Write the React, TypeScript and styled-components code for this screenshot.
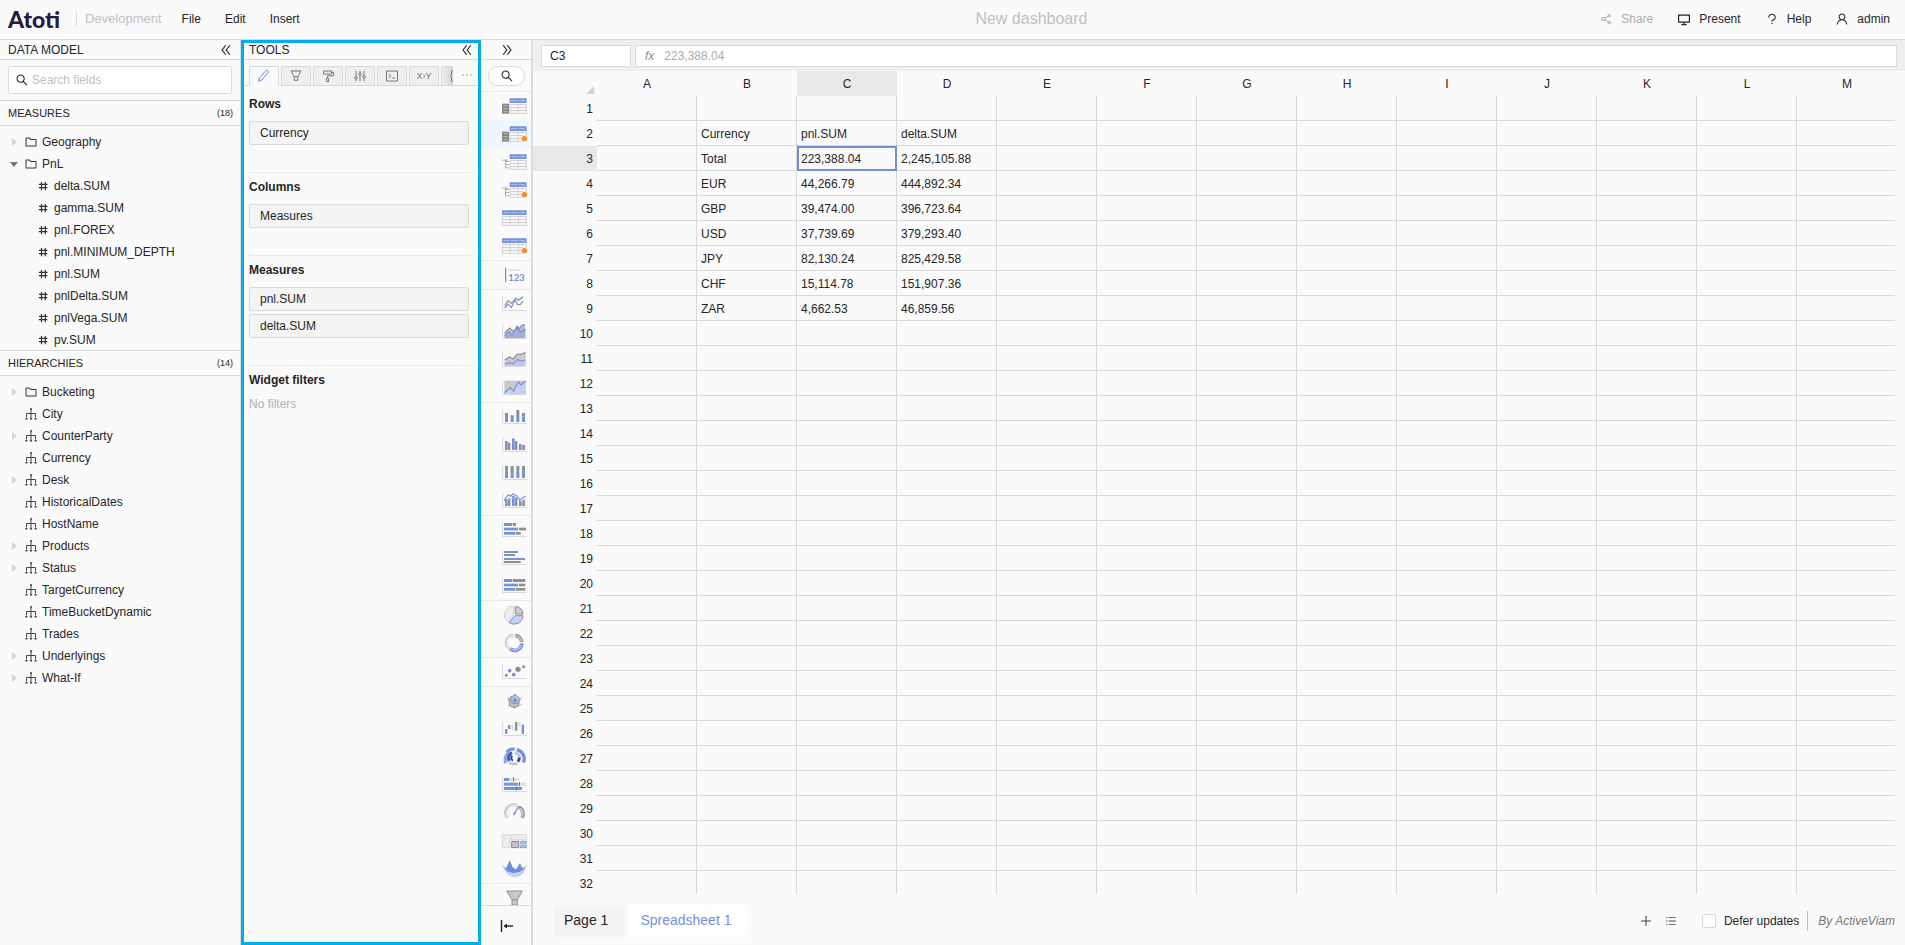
import React from "react";
import styled, { createGlobalStyle, css } from "styled-components";
import {
  AiOutlineDoubleLeft,
  AiOutlineDoubleRight,
  AiOutlineEllipsis,
  AiOutlineFolder,
  AiOutlinePlus,
  AiOutlineQuestion,
  AiOutlineSearch,
  AiOutlineShareAlt,
  AiOutlineUnorderedList,
  AiOutlineUser,
} from "react-icons/ai";

const c = {
  bg: "#fafafa",
  line: "#d9d9d9",
  soft: "#e8e8e8",
  text: "#262626",
  muted: "#bfbfbf",
  blue: "#7590dc",
  pale: "#b9c7ee",
  grey: "#8f8f8f",
  light: "#dedede",
  highlight: "#00aee9",
  orange: "#fa8c24",
};

const GlobalStyle = createGlobalStyle`
  *, *::before, *::after { box-sizing: border-box; }
  body {
    margin: 0;
    background: ${c.bg};
    color: ${c.text};
    font: 12px/16px "Liberation Sans", Arial, sans-serif;
  }
  button, input { font: inherit; color: inherit; }
  button { margin: 0; padding: 0; border: 0; background: none; cursor: pointer; }
  svg { display: block; flex: none; }
`;

/* ---------- Page frame ---------- */

const Page = styled.div`
  display: flex;
  flex-direction: column;
  height: 100vh;
  overflow: hidden;
`;

const Workspace = styled.div`
  display: flex;
  flex: 1;
  min-height: 0;
`;

const Header = styled.header`
  display: flex;
  align-items: center;
  flex: none;
  height: 40px;
  padding: 0 15px 2px 8px;
  border-bottom: 1px solid ${c.line};
`;

const Brand = styled.span`
  width: 68px;
  color: #2a1a40;
  font: 900 23px/24px Lato, sans-serif;
`;

const Environment = styled.span`
  padding-left: 8px;
  border-left: 1px solid ${c.line};
  color: ${c.muted};
  font-size: 13px;
  line-height: 14px;
`;

const Menu = styled.nav`
  display: flex;
  gap: 24px;
  margin-left: 20px;
`;

const Title = styled.h1`
  flex: 1;
  margin: 0;
  padding-left: 164px;
  text-align: center;
  color: ${c.muted};
  font-size: 16px;
  font-weight: 400;
  line-height: 20px;
`;

const Actions = styled.div`
  display: flex;
  gap: 24px;
`;

const Action = styled.button<{ $muted?: boolean }>`
  display: flex;
  align-items: center;
  gap: 8px;
  color: ${(p) => (p.$muted ? "#acacac" : c.text)};
`;

/* ---------- Side panels ---------- */

const PanelHead = styled.div`
  display: flex;
  align-items: center;
  justify-content: space-between;
  flex: none;
  height: 20px;
  padding: 0 7px 0 8px;
  border-bottom: 1px solid ${c.line};
`;

const PanelTitle = styled.h2`
  margin: 0;
  font-size: 12px;
  font-weight: 400;
  line-height: 16px;
`;

const DataModel = styled.aside`
  display: flex;
  flex-direction: column;
  flex: none;
  width: 241px;
  border-right: 1px solid ${c.line};
`;

const SearchRow = styled.div`
  flex: none;
  padding: 6px 8px;
  border-bottom: 1px solid ${c.line};
`;

const SearchBox = styled.label`
  display: flex;
  align-items: center;
  gap: 3px;
  height: 28px;
  padding: 0 6px;
  border: 1px solid ${c.line};
  border-radius: 2px;
  background: #fff;
`;

const SearchInput = styled.input`
  flex: 1;
  min-width: 0;
  padding: 0;
  border: 0;
  outline: 0;
  background: none;
  &::placeholder { color: ${c.muted}; opacity: 1; }
`;

const SectionHead = styled.div`
  display: flex;
  align-items: center;
  justify-content: space-between;
  flex: none;
  height: 25px;
  padding: 0 7px 0 8px;
  border-bottom: 1px solid ${c.line};
`;

const SectionTitle = styled.h3`
  margin: 0;
  font-size: 11px;
  font-weight: 400;
`;

const Count = styled.span`
  font-size: 9px;
`;

const Tree = styled.ul<{ $capped?: boolean }>`
  margin: 0;
  padding: 5px 8px;
  list-style: none;
  overflow: hidden;
  ${(p) =>
    p.$capped
      ? css`
          flex: 0 0 225px;
          border-bottom: 1px solid ${c.line};
        `
      : css`
          flex: 1;
        `}
`;

const TreeItem = styled.button<{ $level: number }>`
  display: flex;
  align-items: center;
  gap: 4px;
  width: 100%;
  height: 22px;
  padding-left: ${(p) => p.$level * 12}px;
`;

const CaretSlot = styled.span`
  display: grid;
  place-items: center;
  width: 12px;
  height: 12px;
`;

const Tools = styled.aside`
  display: flex;
  flex-direction: column;
  flex: none;
  width: 240px;
  outline: 3px solid ${c.highlight};
  outline-offset: -3px;
`;

const TabBar = styled.div`
  display: flex;
  flex: none;
  height: 26px;
  padding: 6px 0 0 8px;
  background: linear-gradient(${c.line}, ${c.line}) bottom / 100% 1px no-repeat;
`;

const TabStrip = styled.div`
  display: flex;
  gap: 2px;
  width: 204px;
  overflow: hidden;
`;

const ToolTab = styled.button<{ $active?: boolean; $faded?: boolean }>`
  display: grid;
  place-items: center;
  flex: 0 0 30px;
  height: 20px;
  border: 1px solid ${c.line};
  border-bottom-color: ${(p) => (p.$active ? c.bg : c.line)};
  border-radius: 2px 2px 0 0;
  background: ${(p) => (p.$active ? c.bg : p.$faded ? "linear-gradient(to right, #efefef, #d4d4d4 40%)" : "#efefef")};
  color: ${(p) => (p.$active ? c.blue : "#777")};
  font-size: 9px;
  line-height: 12px;
`;

const MoreTabs = styled.button`
  display: grid;
  place-items: center;
  width: 28px;
  height: 18px;
  color: ${c.grey};
`;

const Fields = styled.div`
  padding: 4px 8px 0;
`;

const FieldGroup = styled.section`
  padding: 6px 0 27px;
  & + & { border-top: 1px solid ${c.soft}; }
`;

const FieldTitle = styled.h3`
  margin: 0;
  font-size: 12px;
  line-height: 16px;
`;

const Chips = styled.div`
  display: flex;
  flex-direction: column;
  gap: 3px;
  padding: 9px 4px 0 0;
`;

const Chip = styled.button`
  height: 24px;
  padding: 0 10px;
  border: 1px solid ${c.line};
  border-radius: 2px;
  background: #f4f4f4;
  text-align: left;
`;

const EmptyNote = styled.p`
  margin: 8px 0 0;
  color: #b0b0b0;
`;

/* ---------- Widget gallery ---------- */

const Gallery = styled.aside`
  display: flex;
  flex-direction: column;
  flex: none;
  width: 52px;
  border-right: 2px solid #dcdcdc;
`;

const GalleryHead = styled.div`
  display: grid;
  justify-content: center;
  align-items: center;
  flex: none;
  height: 20px;
  padding-left: 2px;
  border-bottom: 1px solid ${c.line};
`;

const GallerySearch = styled.div`
  flex: none;
  height: 32px;
  padding: 6px 6px 5px 7px;
  border-bottom: 1px solid ${c.soft};
`;

const SearchPill = styled.button`
  display: grid;
  place-items: center;
  width: 37px;
  height: 20px;
  border: 1px solid ${c.line};
  border-radius: 10px;
  background: #fff;
`;

const WidgetScroll = styled.div`
  flex: 1;
  min-height: 0;
  overflow: hidden;
`;

const WidgetGroup = styled.div`
  & + & { border-top: 1px solid ${c.soft}; }
`;

const WidgetButton = styled.button<{ $active?: boolean }>`
  display: flex;
  justify-content: flex-end;
  width: 100%;
  height: 28px;
  padding-right: 4px;
  background: ${(p) => (p.$active ? "#eef6ff" : "transparent")};
`;

const GalleryFoot = styled.button`
  display: grid;
  justify-content: center;
  align-items: center;
  flex: none;
  height: 40px;
  padding-left: 2px;
  border-top: 1px solid ${c.line};
`;

/* ---------- Spreadsheet ---------- */

const Main = styled.main`
  display: flex;
  flex-direction: column;
  flex: 1;
  min-width: 0;
`;

const FormulaBar = styled.div`
  display: flex;
  gap: 4px;
  flex: none;
  height: 31px;
  padding: 5px 8px 4px;
  background: #efefef;
`;

const NameBox = styled.input`
  width: 90px;
  height: 22px;
  padding: 0 8px;
  border: 1px solid ${c.line};
  outline: 0;
  background: #fff;
`;

const FormulaBox = styled.label`
  display: flex;
  align-items: center;
  gap: 10px;
  flex: 1;
  height: 22px;
  padding: 0 9px;
  border: 1px solid ${c.line};
  background: #fff;
`;

const Fx = styled.span`
  color: ${c.grey};
  font-style: italic;
`;

const FormulaInput = styled(SearchInput)`
  color: #acacac;
`;

const SheetArea = styled.div`
  flex: 1;
  min-height: 0;
  margin-right: 10px;
  overflow: hidden;
`;

const Sheet = styled.table`
  width: 1364px;
  border-collapse: separate;
  border-spacing: 0;
  table-layout: fixed;
`;

const RowNumberCol = styled.col`
  width: 64px;
`;

const CornerCell = styled.th`
  padding: 0 3px 2px 0;
  vertical-align: bottom;
  svg { margin-left: auto; }
`;

const ColumnHead = styled.th<{ $active?: boolean }>`
  height: 25px;
  padding: 0;
  font-weight: 400;
  background: ${(p) => (p.$active ? "#e8e8e8" : "transparent")};
`;

const RowHead = styled.th<{ $active?: boolean }>`
  height: 25px;
  padding: 0 4px;
  font-weight: 400;
  text-align: right;
  background: ${(p) => (p.$active ? "#e8e8e8" : "transparent")};
`;

const Cell = styled.td<{ $active?: boolean }>`
  height: 25px;
  padding: 2px 4px 0;
  border-right: 1px solid ${c.line};
  border-bottom: 1px solid ${c.line};
  white-space: nowrap;
  ${(p) =>
    p.$active &&
    css`
      outline: 2px solid #7090d8;
      outline-offset: -2px;
    `}
`;

/* ---------- Footer ---------- */

const Footer = styled.footer`
  display: flex;
  align-items: center;
  flex: none;
  height: 51px;
  padding: 11px 10px 8px 20px;
`;

const PageTabs = styled.div`
  display: flex;
  gap: 4px;
  margin-right: auto;
`;

const PageTab = styled.button<{ $active?: boolean }>`
  height: 32px;
  padding: 0 17px 2px 11px;
  border-radius: 0 0 4px 4px;
  background: ${(p) => (p.$active ? "#fff" : "#f4f4f4")};
  color: ${(p) => (p.$active ? c.blue : c.text)};
  font-size: 14px;
`;

const IconButton = styled.button`
  display: grid;
  place-items: center;
  width: 25px;
  height: 24px;
  color: #444;
`;

const Defer = styled.label`
  display: flex;
  align-items: center;
  gap: 8px;
  margin-left: 18px;
`;

const CheckBox = styled.input`
  appearance: none;
  width: 14px;
  height: 14px;
  margin: 0;
  border: 1px solid ${c.line};
  border-radius: 2px;
  background: #fff;
`;

const Credit = styled.em`
  margin-left: 8px;
  padding-left: 10px;
  border-left: 1px solid ${c.muted};
  color: #777;
  line-height: 20px;
`;

/* ---------- Small icons ---------- */

const PresentIcon = () => (
  <svg width="14" height="14" viewBox="0 0 14 14" fill="none" stroke="currentColor" strokeWidth="1.2">
    <path d="M1.6 3.2h10.8v7H1.6z" />
    <path d="M7 10v2.4M4.4 12.6h5.2" />
  </svg>
);

const HashIcon = () => (
  <svg width="14" height="14" viewBox="0 0 14 14" fill="none" stroke="#333" strokeWidth="1.2">
    <path d="M5.5 3v8.200M9.300 3v8.200M3 5.400h8.500M2.800 8.600h8.500" />
  </svg>
);

const HierarchyIcon = () => (
  <svg width="14" height="14" viewBox="0 0 14 14" fill="none" stroke="#444">
    <path d="M7 2V12M2.500 10.500V6.500h9v4" />
    <path d="M6 2h2M1.300 11.800h2.200M5.900 11.800h2.200M10.500 11.800h2.200" strokeWidth="1.500" />
  </svg>
);

const Caret = ({ open }: { open?: boolean }) => (
  <svg width="10" height="10" viewBox="0 0 10 10">
    {open ? <path d="M1 3h8L5 8z" fill="#777" /> : <path d="M3 1v8l5-4z" fill="#d4d4d4" />}
  </svg>
);

const tabArt: Record<string, React.ReactNode> = {
  Edit: <path d="M1.5 12.5l1-3.5L9 1.4q.8-.7 1.7 0t.6 1.8L5 10.8z" />,
  Filters: <path d="M2 2h10L8.8 7.6H5.2zM5.2 7.600v3.700h3.600V7.600" />,
  Style: <path d="M2.5 2h8v3h-8zM10.5 3.4h2v3.4H6.6v2.4M5.6 9.2h2v3.4h-2z" />,
  Properties: (
    <path d="M3 1.5v6M3 10v2.5M7 1.5v2.5M7 6.5v6M11 1.5v5M11 9v3.5M1.6 8.8a1.4 1.2 0 1 0 2.8 0a1.4 1.2 0 1 0-2.8 0M5.6 5.2a1.4 1.2 0 1 0 2.8 0a1.4 1.2 0 1 0-2.8 0M9.6 7.8a1.4 1.2 0 1 0 2.8 0a1.4 1.2 0 1 0-2.8 0" />
  ),
  Query: <path d="M1.5 2h11v10h-11zM3.8 4.8l2 2-2 2M7.2 9h3" />,
  Code: <path d="M4.500 1.500H3.500Q2.500 1.500 2.500 3V5.500L1.500 7L2.500 8.500V11Q2.500 12.500 3.500 12.500H4.500M9.500 1.500h1q1 0 1 1.500v2.500l1 1.500l-1 1.500V11q0 1.500-1 1.500h-1" />,
};

const TabIcon = ({ name }: { name: string }) => (
  <svg width="14" height="14" viewBox="0 0 14 14" fill="none" stroke="currentColor">
    {tabArt[name]}
  </svg>
);

const CollapseIcon = () => (
  <svg width="14" height="14" viewBox="0 0 14 14" stroke="#222" fill="none">
    <path d="M1.5 1v12" strokeWidth="1.4" />
    <path d="M4.5 7H13" strokeWidth="1.4" />
    <path d="M3.500 7l3.500-2.500v5z" fill="#222" stroke="none" />
  </svg>
);

/* ---------- Widget icons, each on a 78 x 84 board ---------- */

type Box = [x: number, y: number, w: number, h: number, fill: string];

const Boxes = ({ items }: { items: Box[] }) => (
  <>
    {items.map(([x, y, width, height, fill], i) => (
      <rect key={i} x={x} y={y} width={width} height={height} fill={fill} />
    ))}
  </>
);

const Axis = () => <path d="M5 19V61.500H77" fill="none" stroke="#d8d8d8" strokeWidth="3" />;

const TableArt = ({ left, dot }: { left?: "rows" | "tree"; dot?: boolean }) => {
  const x = left ? 26 : 3;
  const w = 77 - x;
  const cols = left ? 2 : 3;
  const inner = Array.from({ length: cols - 1 }, (_, i) => x + (w * (i + 1)) / cols);
  return (
    <>
      <rect x={x} y="19" width={w} height="14" rx="2" fill={c.blue} />
      <path d={`M${x + 4} 26H${x + w - 4}`} stroke="#a9baec" strokeWidth="4" />
      {inner.map((v) => (
        <path key={v} d={`M${v} 20V32`} stroke={c.blue} strokeWidth="3" />
      ))}
      <path
        d={`M${x + 1} 37.500H${x + w - 1}V64H${x + 1}zM${x} 46.500H${x + w}M${x} 55.500H${x + w}${inner.map((v) => `M${v} 36V65`).join("")}`}
        fill="#f7f7f7"
        stroke="#d2d2d2"
        strokeWidth="3"
      />
      {left === "rows" && (
        <>
          <rect x="3" y="35" width="21" height="30" fill="#868686" />
          <path d="M7 41H20M7 50H20M7 59H20" stroke="#bdbdbd" strokeWidth="3" />
        </>
      )}
      {left === "tree" && (
        <>
          <path d="M3 36.500H7M10 36.500H20" stroke="#8d8d8d" strokeWidth="3" />
          <path d="M13.500 37V60M13 40.500H24M13 49.500H24M13 59.500H24" fill="none" stroke="#b0b0b0" strokeWidth="3" />
        </>
      )}
      {dot && <circle cx="70" cy="56" r="10" fill={c.bg} />}
      {dot && <circle cx="70" cy="56" r="8" fill={c.orange} />}
    </>
  );
};

const Stroke = ({ d, color, width = 3.5 }: { d: string; color: string; width?: number }) => (
  <path d={d} fill="none" stroke={color} strokeWidth={width} strokeLinejoin="round" />
);

const blueRun = "M11 54L24 41L33 52L48 24L55 32L62 22L72 20";
const barX = [12, 29, 46, 63];

const widgetArt: Record<string, React.ReactNode> = {
  "Pivot table": <TableArt left="rows" />,
  "Pivot table with filters": <TableArt left="rows" dot />,
  "Tree table": <TableArt left="tree" />,
  "Tree table with filters": <TableArt left="tree" dot />,
  Table: <TableArt />,
  "Table with filters": <TableArt dot />,
  KPI: (
    <>
      <path d="M14 20V63" stroke="#777" strokeWidth="3" />
      <path d="M23 27H59" stroke={c.light} strokeWidth="5" />
      <text x="22" y="61" fontSize="28" fontWeight="700" fontFamily="Lato, sans-serif" fill={c.blue}>
        123
      </text>
    </>
  ),
  "Line chart": (
    <>
      <Axis />
      <Stroke d="M11 47L22 32L31 40L41 29L49 43L57 44L66 34" color={c.grey} />
      <Stroke d="M11 54L22 42L31 53L44 24L52 31L66 20" color={c.blue} />
    </>
  ),
  "Area chart": (
    <>
      <Axis />
      <path d="M11 45L26 30L38 40L48 30L60 42L74 34V60H11z" fill="#c9c9c9" />
      <path d={`${blueRun}V60H11z`} fill="#8fa4e0" opacity="0.7" />
      <Stroke d="M11 45L26 30L38 40L48 30L60 42L74 34" color={c.grey} />
      <Stroke d={blueRun} color={c.blue} />
    </>
  ),
  "Stacked area chart": (
    <>
      <Axis />
      <path d="M11 42L26 32L36 39L50 24L58 26L74 20V42L11 56z" fill="#cccccc" />
      <path d="M11 54L26 50L36 53L50 40L58 45L74 42V60H11z" fill={c.pale} />
      <Stroke d="M11 42L26 32L36 39L50 24L58 26L74 20" color={c.grey} />
      <Stroke d="M11 54L26 50L36 53L50 40L58 45L74 42" color={c.blue} />
    </>
  ),
  "Full area chart": (
    <>
      <Axis />
      <rect x="10" y="20" width="64" height="40" fill="#c8c8c8" />
      <path d="M10 56L28 41L38 51L52 23L59 33L74 22V60H10z" fill="#c3cff1" />
      <Stroke d="M10 56L28 41L38 51L52 23L59 33L74 22" color={c.blue} />
    </>
  ),
  "Stacked columns": (
    <>
      <Axis />
      <Boxes
        items={[[30, 42], [37, 45], [21, 33], [30, 40]].flatMap(([top, split], i): Box[] => [
          [barX[i], top, 9, split - top, c.grey],
          [barX[i], split, 9, 57 - split, c.blue],
        ])}
      />
    </>
  ),
  "Clustered columns": (
    <>
      <Axis />
      <Boxes
        items={[
          [12, 30, 8, 27, c.blue], [21, 35, 7, 22, c.grey],
          [33, 22, 8, 35, c.blue], [42, 30, 7, 27, c.grey],
          [54, 39, 8, 18, c.blue], [64, 42, 8, 15, c.grey],
        ]}
      />
    </>
  ),
  "Full columns": (
    <>
      <Axis />
      <Boxes
        items={[34, 44, 35, 34].flatMap((split, i): Box[] => [
          [barX[i], 21, 9, split - 21, c.grey],
          [barX[i], split, 9, 57 - split, c.blue],
        ])}
      />
    </>
  ),
  "Combo chart": (
    <>
      <Axis />
      <Boxes
        items={[
          [12, 37, 8, 20, c.blue], [21, 34, 7, 23, c.grey],
          [33, 27, 8, 30, c.blue], [42, 31, 7, 26, c.grey],
          [54, 42, 8, 15, c.blue], [64, 38, 8, 19, c.grey],
        ]}
      />
      <Stroke d="M9 41L22 23L29 28L35 21L48 27L56 40L74 27" color={c.blue} />
      <Stroke d="M12 50L28 36L48 29L74 46" color={c.pale} width={2} />
    </>
  ),
  "Stacked bars": (
    <>
      <Axis />
      <Boxes
        items={[
          [9, 21, 24, 9, c.blue], [35, 21, 10, 9, c.grey],
          [9, 35, 42, 8, c.blue], [54, 35, 21, 8, c.grey],
          [9, 48, 34, 8, c.blue], [45, 48, 14, 8, c.grey],
        ]}
      />
    </>
  ),
  "Clustered bars": (
    <>
      <Axis />
      <Boxes
        items={[
          [9, 21, 42, 6, c.blue], [9, 30, 33, 6, c.grey],
          [9, 42, 63, 6, c.blue], [9, 51, 50, 6, c.grey],
        ]}
      />
    </>
  ),
  "Full bars": (
    <>
      <Axis />
      <Boxes
        items={[
          [9, 21, 24, 9, c.blue], [35, 21, 38, 9, c.grey],
          [9, 35, 42, 8, c.blue], [54, 35, 19, 8, c.grey],
          [9, 48, 33, 8, c.blue], [44, 48, 29, 8, c.grey],
        ]}
      />
    </>
  ),
  "Pie chart": (
    <g strokeWidth="3">
      <path d="M38 42V16A26 26 0 0 0 20 62z" fill="#ececec" stroke="#cfcfcf" />
      <path d="M43 39V16A24 24 0 0 1 66 39z" fill="#cdcdcd" stroke={c.grey} />
      <path d="M42 44H66A26 26 0 0 1 24 64z" fill="#c6d2f3" stroke={c.blue} />
    </g>
  ),
  "Donut chart": (
    <g fill="none" strokeWidth="11">
      <path d="M38 20A21 21 0 0 0 24 57" stroke="#cfcfcf" />
      <path d="M37 21A21 21 0 0 0 25 56" stroke="#f0f0f0" strokeWidth="5" />
      <path d="M43 20A21 21 0 0 1 62 39" stroke={c.grey} />
      <path d="M44 21A21 21 0 0 1 61 37" stroke="#c4c4c4" strokeWidth="5" />
      <path d="M62 43A21 21 0 0 1 27 59" stroke={c.blue} />
      <path d="M61 46A21 21 0 0 1 29 60" stroke="#b9c7ee" strokeWidth="4" />
    </g>
  ),
  "Scatter chart": (
    <>
      <Axis />
      <circle cx="26" cy="38" r="5.500" fill={c.blue} />
      <circle cx="51" cy="34" r="8" fill={c.grey} />
      <circle cx="68" cy="26" r="4.500" fill={c.blue} />
      <circle cx="38" cy="50" r="5.500" fill={c.blue} />
      <circle cx="16" cy="52" r="4.500" fill={c.grey} />
    </>
  ),
  "Radar chart": (
    <>
      <path d="M41 19V65M18 33L62 54M63 31L20 58" stroke="#b0b0b0" strokeWidth="2.500" />
      <path d="M23 37L35 31L54 40L53 57L38 62L26 56z" fill="#bcbcbc" stroke={c.grey} strokeWidth="3" />
      <path d="M27 31L44 23L58 37L48 50L34 48z" fill="#a9baec" fillOpacity="0.800" stroke={c.blue} strokeWidth="3" />
      <path d="M35 40L44 34L48 42L40 47z" fill={c.grey} />
    </>
  ),
  "Waterfall chart": (
    <>
      <Axis />
      <Boxes
        items={[
          [12, 42, 7, 15, c.blue], [21, 30, 7, 12, c.grey], [31, 30, 7, 17, c.light],
          [42, 21, 7, 26, c.grey], [52, 21, 7, 13, c.light], [62, 29, 7, 28, c.blue],
        ]}
      />
    </>
  ),
  Sunburst: (
    <g fill="none">
      <path d="M15 60A28 28 0 0 1 24 28" stroke="#8fa6e6" strokeWidth="11" />
      <path d="M17 27Q26 17 41 18" stroke={c.blue} strokeWidth="9" />
      <path d="M47 20A27 27 0 0 1 67 58" stroke={c.blue} strokeWidth="10" />
      <path d="M25 54A18 18 0 0 1 33 29" stroke="#3f5fb8" strokeWidth="9" />
      <path d="M41 30A16 16 0 0 1 56 42" stroke={c.pale} strokeWidth="9" />
      <path d="M55 43A16 16 0 0 1 50 56" stroke="#34497f" strokeWidth="9" />
      <path d="M34 38A9 9 0 0 0 36 53" stroke="#34497f" strokeWidth="6" />
      <path d="M25 59Q36 67 49 60" stroke={c.pale} strokeWidth="8" />
    </g>
  ),
  "Bullet chart": (
    <>
      <Axis />
      <Boxes
        items={[
          [9, 21, 16, 9, c.blue], [27, 21, 28, 9, c.light], [36, 19, 3, 13, "#777"],
          [9, 35, 43, 9, c.blue], [52, 35, 24, 9, c.light], [54, 33, 3, 13, "#777"],
          [9, 48, 54, 9, c.blue], [45, 46, 3, 13, "#777"],
        ]}
      />
    </>
  ),
  Gauge: (
    <g fill="none">
      <path d="M20 56A23 23 0 0 1 47 20" stroke="#cfcfcf" strokeWidth="11" />
      <path d="M21 53A23 23 0 0 1 45 20" stroke="#ececec" strokeWidth="5" />
      <path d="M54 24A23 23 0 0 1 63 56" stroke={c.grey} strokeWidth="11" />
      <path d="M56 27A23 23 0 0 1 63 53" stroke="#cdcdcd" strokeWidth="5" />
      <path d="M40 45L53 21" stroke={c.blue} strokeWidth="4" />
      <circle cx="40" cy="44" r="3.500" fill={c.blue} />
    </g>
  ),
  Treemap: (
    <g strokeWidth="2.500">
      <path d="M4 23H27V62H4zM31 23H76V38H31z" fill="#ececec" stroke="#d2d2d2" />
      <path d="M32 43H53V62H32z" fill="#c4c4c4" stroke="#777" />
      <path d="M58 43H76V50H58zM58 55H76V62H58z" fill={c.pale} stroke={c.blue} />
    </g>
  ),
  "Surface chart": (
    <>
      <path d="M3 28Q16 46 40 48T77 28Q68 66 41 67Q16 64 3 28z" fill="#a9baec" />
      <path d="M14 42L26 16L36 38L46 43L57 24L63 38L70 36Q60 55 41 54Q22 54 14 42z" fill="#6f8cdc" />
      <path d="M14 48Q40 62 66 46Q58 66 41 67Q22 64 14 48z" fill="#c6d2f3" />
    </>
  ),
  Funnel: (
    <path d="M17 21H64L49 47V63H33V47zM33 47H49" fill="#c8c8c8" stroke={c.grey} strokeWidth="3" />
  ),
};

const widgetGroups: string[][] = [
  ["Pivot table", "Pivot table with filters", "Tree table", "Tree table with filters", "Table", "Table with filters"],
  ["KPI"],
  ["Line chart", "Area chart", "Stacked area chart", "Full area chart"],
  ["Stacked columns", "Clustered columns", "Full columns", "Combo chart"],
  ["Stacked bars", "Clustered bars", "Full bars"],
  ["Pie chart", "Donut chart"],
  ["Scatter chart"],
  ["Radar chart", "Waterfall chart", "Sunburst", "Bullet chart", "Gauge", "Treemap", "Surface chart"],
  ["Funnel"],
];

/* ---------- Data ---------- */

type Node = { label: string; icon: "folder" | "measure" | "hierarchy"; level?: number; caret?: "open" | "closed" };

const measures: Node[] = [
  { label: "Geography", icon: "folder", caret: "closed" },
  { label: "PnL", icon: "folder", caret: "open" },
  ...["delta.SUM", "gamma.SUM", "pnl.FOREX", "pnl.MINIMUM_DEPTH", "pnl.SUM", "pnlDelta.SUM", "pnlVega.SUM", "pv.SUM"].map(
    (label): Node => ({ label, icon: "measure", level: 1 })
  ),
];

const expandable = new Set(["CounterParty", "Desk", "Products", "Status", "Underlyings", "What-If"]);

const hierarchies: Node[] = [
  { label: "Bucketing", icon: "folder", caret: "closed" },
  ...[
    "City", "CounterParty", "Currency", "Desk", "HistoricalDates", "HostName", "Products",
    "Status", "TargetCurrency", "TimeBucketDynamic", "Trades", "Underlyings", "What-If",
  ].map((label): Node => ({ label, icon: "hierarchy", caret: expandable.has(label) ? "closed" : undefined })),
];

const columns = "ABCDEFGHIJKLM".split("");

const cells: Record<number, string[]> = {
  2: ["", "Currency", "pnl.SUM", "delta.SUM"],
  3: ["", "Total", "223,388.04", "2,245,105.88"],
  4: ["", "EUR", "44,266.79", "444,892.34"],
  5: ["", "GBP", "39,474.00", "396,723.64"],
  6: ["", "USD", "37,739.69", "379,293.40"],
  7: ["", "JPY", "82,130.24", "825,429.58"],
  8: ["", "CHF", "15,114.78", "151,907.36"],
  9: ["", "ZAR", "4,662.53", "46,859.56"],
};

const TreeNodes = ({ nodes, capped }: { nodes: Node[]; capped?: boolean }) => (
  <Tree $capped={capped}>
    {nodes.map((n) => (
      <li key={n.label}>
        <TreeItem $level={n.level ?? 0}>
          <CaretSlot>{n.caret && <Caret open={n.caret === "open"} />}</CaretSlot>
          {n.icon === "folder" && <AiOutlineFolder size={14} color="#333" />}
          {n.icon === "measure" && <HashIcon />}
          {n.icon === "hierarchy" && <HierarchyIcon />}
          {n.label}
        </TreeItem>
      </li>
    ))}
  </Tree>
);

const toolTabs = ["Edit", "Filters", "Style", "Properties", "Query"];

const fieldGroups = [
  { title: "Rows", items: ["Currency"] },
  { title: "Columns", items: ["Measures"] },
  { title: "Measures", items: ["pnl.SUM", "delta.SUM"] },
];

export default function App() {
  return (
    <Page>
      <GlobalStyle />
      <Header>
        <Brand>Atoti</Brand>
        <Environment>Development</Environment>
        <Menu>
          <Action>File</Action>
          <Action>Edit</Action>
          <Action>Insert</Action>
        </Menu>
        <Title>New dashboard</Title>
        <Actions>
          <Action $muted><AiOutlineShareAlt size={14} />Share</Action>
          <Action><PresentIcon />Present</Action>
          <Action><AiOutlineQuestion size={14} />Help</Action>
          <Action><AiOutlineUser size={14} />admin</Action>
        </Actions>
      </Header>

      <Workspace>
        <DataModel>
          <PanelHead>
            <PanelTitle>DATA MODEL</PanelTitle>
            <button aria-label="Collapse data model"><AiOutlineDoubleLeft size={14} /></button>
          </PanelHead>
          <SearchRow>
            <SearchBox>
              <AiOutlineSearch size={14} />
              <SearchInput aria-label="Search fields" placeholder="Search fields" />
            </SearchBox>
          </SearchRow>
          <SectionHead>
            <SectionTitle>MEASURES</SectionTitle>
            <Count>(18)</Count>
          </SectionHead>
          <TreeNodes nodes={measures} capped />
          <SectionHead>
            <SectionTitle>HIERARCHIES</SectionTitle>
            <Count>(14)</Count>
          </SectionHead>
          <TreeNodes nodes={hierarchies} />
        </DataModel>

        <Tools>
          <PanelHead>
            <PanelTitle>TOOLS</PanelTitle>
            <button aria-label="Collapse tools"><AiOutlineDoubleLeft size={14} /></button>
          </PanelHead>
          <TabBar>
            <TabStrip>
              {toolTabs.map((name, i) => (
                <ToolTab key={name} aria-label={name} $active={i === 0}>
                  <TabIcon name={name} />
                </ToolTab>
              ))}
              <ToolTab>X›Y</ToolTab>
              <ToolTab aria-label="Code" $faded><TabIcon name="Code" /></ToolTab>
            </TabStrip>
            <MoreTabs aria-label="More tabs"><AiOutlineEllipsis size={14} /></MoreTabs>
          </TabBar>
          <Fields>
            {fieldGroups.map((g) => (
              <FieldGroup key={g.title}>
                <FieldTitle>{g.title}</FieldTitle>
                <Chips>
                  {g.items.map((item) => <Chip key={item}>{item}</Chip>)}
                </Chips>
              </FieldGroup>
            ))}
            <FieldGroup>
              <FieldTitle>Widget filters</FieldTitle>
              <EmptyNote>No filters</EmptyNote>
            </FieldGroup>
          </Fields>
        </Tools>

        <Gallery>
          <GalleryHead>
            <button aria-label="Expand widgets"><AiOutlineDoubleRight size={14} /></button>
          </GalleryHead>
          <GallerySearch>
            <SearchPill aria-label="Search widgets"><AiOutlineSearch size={14} /></SearchPill>
          </GallerySearch>
          <WidgetScroll>
            {widgetGroups.map((group) => (
              <WidgetGroup key={group[0]}>
                {group.map((name) => (
                  <WidgetButton key={name} aria-label={name} $active={name === "Pivot table with filters"}>
                    <svg width="26" height="28" viewBox="0 0 78 84">{widgetArt[name]}</svg>
                  </WidgetButton>
                ))}
              </WidgetGroup>
            ))}
          </WidgetScroll>
          <GalleryFoot aria-label="Dock widgets"><CollapseIcon /></GalleryFoot>
        </Gallery>

        <Main>
          <FormulaBar>
            <NameBox aria-label="Cell" defaultValue="C3" />
            <FormulaBox>
              <Fx>fx</Fx>
              <FormulaInput aria-label="Formula" defaultValue="223,388.04" />
            </FormulaBox>
          </FormulaBar>
          <SheetArea>
            <Sheet>
              <colgroup>
                <RowNumberCol />
                {columns.map((name) => <col key={name} />)}
              </colgroup>
              <thead>
                <tr>
                  <CornerCell>
                    <svg width="8" height="8" viewBox="0 0 8 8"><path d="M8 0v8H0z" fill="#d4d4d4" /></svg>
                  </CornerCell>
                  {columns.map((name) => (
                    <ColumnHead key={name} scope="col" $active={name === "C"}>{name}</ColumnHead>
                  ))}
                </tr>
              </thead>
              <tbody>
                {Array.from({ length: 32 }, (_, r) => r + 1).map((row) => (
                  <tr key={row}>
                    <RowHead scope="row" $active={row === 3}>{row}</RowHead>
                    {columns.map((name, i) => (
                      <Cell key={name} $active={row === 3 && name === "C"}>{cells[row]?.[i]}</Cell>
                    ))}
                  </tr>
                ))}
              </tbody>
            </Sheet>
          </SheetArea>
          <Footer>
            <PageTabs>
              <PageTab>Page 1</PageTab>
              <PageTab $active>Spreadsheet 1</PageTab>
            </PageTabs>
            <IconButton aria-label="Add page"><AiOutlinePlus size={14} /></IconButton>
            <IconButton aria-label="List pages"><AiOutlineUnorderedList size={12} /></IconButton>
            <Defer>
              <CheckBox type="checkbox" />
              Defer updates
            </Defer>
            <Credit>By ActiveViam</Credit>
          </Footer>
        </Main>
      </Workspace>
    </Page>
  );
}
